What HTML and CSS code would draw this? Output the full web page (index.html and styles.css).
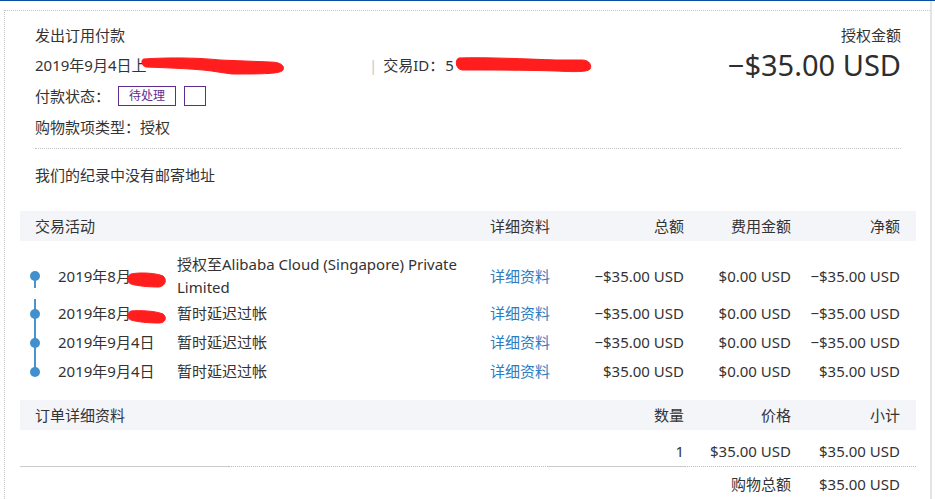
FILE: index.html
```html
<!DOCTYPE html>
<html lang="zh-CN">
<head>
<meta charset="utf-8">
<title>发出订用付款</title>
<link rel="stylesheet" href="styles.css">
</head>
<body>
<div class="topbar"></div>
<div class="page">
  <main class="main">
    <section class="summary">
      <div class="summary-left">
        <div class="line">发出订用付款</div>
        <div class="line meta">
          <span class="meta-date">2019年9月4日上<svg class="scribble s-long" width="142" height="18" viewBox="0 0 142 18"><path d="M2 2 C30 0 60 1 78 3 L128 5 C139 5 143 9 141 13 C139 17 120 17 90 17 L76 15 C60 12 30 11 4 10 C-1 9 -1 2 2 2 Z" /></svg></span>
          <span class="meta-sep">|</span>
          <span class="meta-id">交易ID：</span>
          <span class="meta-idval">5<svg class="scribble s-id" width="134" height="16" viewBox="0 0 134 16"><path d="M3 1 C30 0 70 2 100 3 L126 3 C134 3 136 9 134 12 C132 15 120 15 100 14 C70 13 30 13 6 13 C-1 12 -1 2 3 1 Z" /></svg></span>
        </div>
        <div class="line status">付款状态：<span class="badge">待处理</span><span class="badge-empty"></span></div>
        <div class="line">购物款项类型：授权</div>
      </div>
      <div class="summary-right">
        <div class="line">授权金额</div>
        <div class="amount">−$35.00 USD</div>
      </div>
    </section>
    <div class="divider"></div>
    <p class="address">我们的纪录中没有邮寄地址</p>

    <section class="table">
      <div class="grid head">
        <div class="span-3 pl">交易活动</div>
        <div>详细资料</div>
        <div class="r">总额</div>
        <div class="r">费用金额</div>
        <div class="r">净额</div>
      </div>
      <div class="grid tx first-row">
        <div class="tl tl-first"></div>
        <div>2019年8月<svg class="scribble s-date" width="38" height="14" viewBox="0 0 38 14"><path d="M3 1 C12 -1 28 0 35 3 C39 6 38 13 31 14 C20 14 10 13 3 11 C-1 10 -1 2 3 1 Z" /></svg></div>
        <div class="desc">授权至Alibaba Cloud (Singapore) Private Limited</div>
        <div><a class="link" href="#">详细资料</a></div>
        <div class="r">−$35.00 USD</div>
        <div class="r">$0.00 USD</div>
        <div class="r">−$35.00 USD</div>
      </div>
      <div class="grid tx">
        <div class="tl tl-mid"></div>
        <div>2019年8月<svg class="scribble s-date" width="38" height="14" viewBox="0 0 38 14"><path d="M3 1 C12 0 28 1 35 4 C39 7 38 13 31 13 C20 13 10 12 3 10 C-1 9 -1 2 3 1 Z" /></svg></div>
        <div class="desc">暂时延迟过帐</div>
        <div><a class="link" href="#">详细资料</a></div>
        <div class="r">−$35.00 USD</div>
        <div class="r">$0.00 USD</div>
        <div class="r">−$35.00 USD</div>
      </div>
      <div class="grid tx">
        <div class="tl tl-mid"></div>
        <div>2019年9月4日</div>
        <div class="desc">暂时延迟过帐</div>
        <div><a class="link" href="#">详细资料</a></div>
        <div class="r">−$35.00 USD</div>
        <div class="r">$0.00 USD</div>
        <div class="r">−$35.00 USD</div>
      </div>
      <div class="grid tx">
        <div class="tl tl-last"></div>
        <div>2019年9月4日</div>
        <div class="desc">暂时延迟过帐</div>
        <div><a class="link" href="#">详细资料</a></div>
        <div class="r">$35.00 USD</div>
        <div class="r">$0.00 USD</div>
        <div class="r">$35.00 USD</div>
      </div>
    </section>

    <section class="table order">
      <div class="grid head">
        <div class="span-4 pl">订单详细资料</div>
        <div class="r">数量</div>
        <div class="r">价格</div>
        <div class="r">小计</div>
      </div>
      <div class="grid order-row">
        <div class="c5 r">1</div>
        <div class="r">$35.00 USD</div>
        <div class="r">$35.00 USD</div>
      </div>
      <div class="rule">
        <span class="seg solid w1"></span>
        <span class="seg dotted w2"></span>
        <span class="seg solid w3"></span>
        <span class="seg dotted w4"></span>
      </div>
      <div class="grid total-row">
        <div class="c6 r">购物总额</div>
        <div class="r">$35.00 USD</div>
      </div>
    </section>
  </main>
  <div class="rail"></div>
</div>
</body>
</html>
```

FILE: styles.css
```css
html, body {
  margin: 0;
  padding: 0;
  height: 100%;
  overflow: hidden;
  background: #fff;
}

body {
  font-family: "Noto Sans", "Noto Sans CJK SC", sans-serif;
  font-size: 15px;
  color: #333;
}

.topbar {
  height: 1px;
  background: #0b4d9f;
}

.page {
  display: flex;
  padding-right: 3px;
  height: 498px;
}

.main {
  flex: 1;
  margin-top: 9px;
  margin-left: 4px;
  border-top: 1px dotted #c4c4c4;
  border-left: 1px dotted #c4c4c4;
}

.rail {
  width: 2px;
  background: #e4e4e4;
}

.summary {
  display: flex;
  justify-content: space-between;
  padding: 9px 29px 0 30px;
}

.line {
  height: 30px;
  line-height: 30px;
  white-space: nowrap;
}

.meta {
  display: flex;
  align-items: center;
}

.meta-date {
  width: 337px;
  display: inline-flex;
  align-items: center;
}

.meta-sep {
  color: #c8c8c8;
  margin-left: -3px;
  margin-right: 6px;
}

.meta-idval {
  margin-left: 1px;
  display: inline-flex;
  align-items: center;
}

.scribble {
  overflow: visible;
  flex: none;
}

.scribble path {
  fill: #ff1d1d;
  stroke: #ff1d1d;
  stroke-width: 1;
}

.s-long {
  margin-left: -4px;
  margin-top: 2px;
}

.s-id {
  margin-left: 2px;
}

.s-date {
  margin-left: -3px;
  vertical-align: -5px;
}

.status {
  display: flex;
  align-items: center;
  height: 32px;
}

.badge {
  display: inline-block;
  height: 18px;
  line-height: 18px;
  padding: 0 10px;
  margin-left: 8px;
  border: 1px solid #5e2b8f;
  color: #5e2b8f;
  font-size: 12px;
}

.badge-empty {
  display: inline-block;
  width: 20px;
  height: 18px;
  margin-left: 8px;
  border: 1px solid #5e2b8f;
}

.summary-right {
  text-align: right;
}

.amount {
  font-size: 29px;
  line-height: 30px;
  height: 30px;
  color: #2e2e2e;
}

.divider {
  margin: 6px 29px 0 30px;
  border-top: 1px dotted #c4c4c4;
}

.address {
  margin: 11px 0 0 30px;
  line-height: 30px;
}

.table {
  margin: 21px 14px 0 15px;
}

.grid {
  display: grid;
  grid-template-columns: 38px 119px 313px 100px 94px 107px 109px;
  padding-right: 16px;
  align-items: center;
}

.head {
  height: 30px;
  line-height: 30px;
  background: #f4f5f9;
}

.span-3 {
  grid-column: 1 / 4;
}

.span-4 {
  grid-column: 1 / 5;
}

.pl {
  padding-left: 15px;
}

.r {
  text-align: right;
  white-space: nowrap;
}

.tx {
  height: 29px;
  line-height: 23px;
  white-space: nowrap;
}

.first-row {
  height: 46px;
  margin-top: 12px;
}

.desc {
  white-space: normal;
  padding-right: 15px;
}

.link {
  color: #2b7cc1;
  text-decoration: none;
}

.tl {
  position: relative;
  align-self: stretch;
}

.tl::before {
  content: "";
  position: absolute;
  left: 14px;
  width: 2px;
  background: #4a93cd;
}

.tl::after {
  content: "";
  position: absolute;
  left: 10px;
  top: 50%;
  width: 10px;
  height: 10px;
  margin-top: -5px;
  border-radius: 50%;
  background: #4190cd;
}

.tl-first::before {
  top: 50%;
  height: 12px;
}

.tl-mid::before {
  top: 0;
  bottom: 0;
}

.tl-last::before {
  top: 0;
  height: 50%;
}

.order {
  margin-top: 14px;
}

.order-row {
  padding-top: 7px;
  height: 29px;
  line-height: 29px;
}

.c5 {
  grid-column: 5;
}

.c6 {
  grid-column: 6;
}

.rule {
  display: flex;
}

.seg {
  display: block;
  height: 0;
}

.solid {
  border-top: 1px solid #cbcbcb;
}

.dotted {
  border-top: 1px dotted #bdbdbd;
}

.w1 { width: 208px; }
.w2 { width: 320px; }
.w3 { width: 137px; }
.w4 { flex: 1; }

.total-row {
  padding-top: 3px;
  height: 29px;
  line-height: 29px;
}
```
